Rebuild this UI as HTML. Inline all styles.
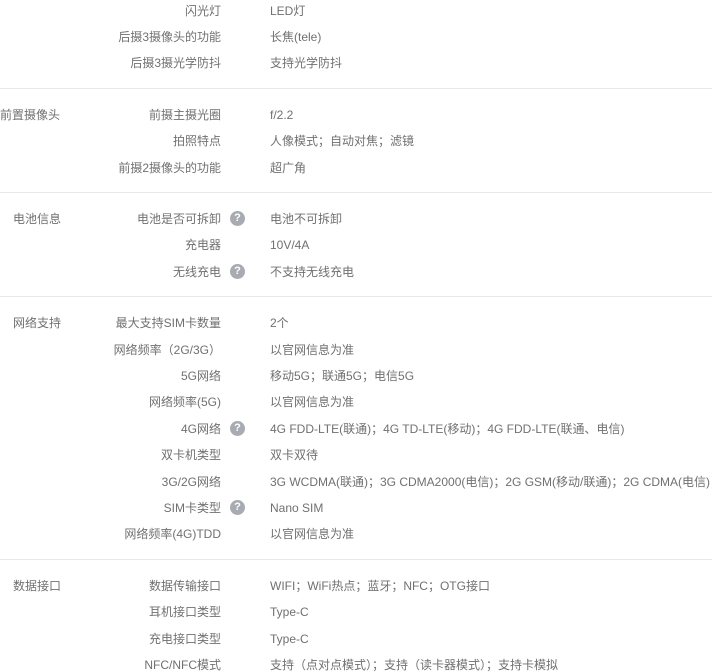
<!DOCTYPE html>
<html><head><meta charset="utf-8"><style>
body{margin:0;width:712px;height:671px;overflow:hidden;background:#fff;font-family:"Liberation Sans","Noto Sans CJK SC",sans-serif;font-size:12px;color:#707070;position:relative}
.s,.l,.v{position:absolute;white-space:nowrap;line-height:14px;margin-top:1px}
.l{right:491px;text-align:right}
.v{left:270px}
.hr{position:absolute;left:0;width:712px;height:1px;background:#e8e8e8}
.q{position:absolute;left:230px;width:15px;height:15px;border-radius:50%;background:#a9abb3;color:#fff;font-weight:bold;font-size:11px;line-height:15px;text-align:center;margin-top:1px}
</style></head><body>
<div class="l" style="top:3px">闪光灯</div><div class="v" style="top:3px">LED灯</div>
<div class="l" style="top:29px">后摄3摄像头的功能</div><div class="v" style="top:29px">长焦(tele)</div>
<div class="l" style="top:55px">后摄3摄光学防抖</div><div class="v" style="top:55px">支持光学防抖</div>
<div class="hr" style="top:88px"></div>
<div class="s" style="left:0;top:107px">前置摄像头</div>
<div class="l" style="top:107px">前摄主摄光圈</div><div class="v" style="top:107px">f/2.2</div>
<div class="l" style="top:133px">拍照特点</div><div class="v" style="top:133px">人像模式；自动对焦；滤镜</div>
<div class="l" style="top:160px">前摄2摄像头的功能</div><div class="v" style="top:160px">超广角</div>
<div class="hr" style="top:192px"></div>
<div class="s" style="left:13px;top:211px">电池信息</div>
<div class="l" style="top:211px">电池是否可拆卸</div><div class="q" style="top:210px">?</div><div class="v" style="top:211px">电池不可拆卸</div>
<div class="l" style="top:237px">充电器</div><div class="v" style="top:237px">10V/4A</div>
<div class="l" style="top:264px">无线充电</div><div class="q" style="top:263px">?</div><div class="v" style="top:264px">不支持无线充电</div>
<div class="hr" style="top:296px"></div>
<div class="s" style="left:13px;top:315px">网络支持</div>
<div class="l" style="top:315px">最大支持SIM卡数量</div><div class="v" style="top:315px">2个</div>
<div class="l" style="top:342px">网络频率（2G/3G）</div><div class="v" style="top:342px">以官网信息为准</div>
<div class="l" style="top:368px">5G网络</div><div class="v" style="top:368px">移动5G；联通5G；电信5G</div>
<div class="l" style="top:394px">网络频率(5G)</div><div class="v" style="top:394px">以官网信息为准</div>
<div class="l" style="top:421px">4G网络</div><div class="q" style="top:420px">?</div><div class="v" style="top:421px">4G FDD-LTE(联通)；4G TD-LTE(移动)；4G FDD-LTE(联通、电信)</div>
<div class="l" style="top:447px">双卡机类型</div><div class="v" style="top:447px">双卡双待</div>
<div class="l" style="top:474px">3G/2G网络</div><div class="v" style="top:474px">3G WCDMA(联通)；3G CDMA2000(电信)；2G GSM(移动/联通)；2G CDMA(电信)</div>
<div class="l" style="top:500px">SIM卡类型</div><div class="q" style="top:499px">?</div><div class="v" style="top:500px">Nano SIM</div>
<div class="l" style="top:526px">网络频率(4G)TDD</div><div class="v" style="top:526px">以官网信息为准</div>
<div class="hr" style="top:559px"></div>
<div class="s" style="left:13px;top:578px">数据接口</div>
<div class="l" style="top:578px">数据传输接口</div><div class="v" style="top:578px">WIFI；WiFi热点；蓝牙；NFC；OTG接口</div>
<div class="l" style="top:604px">耳机接口类型</div><div class="v" style="top:604px">Type-C</div>
<div class="l" style="top:631px">充电接口类型</div><div class="v" style="top:631px">Type-C</div>
<div class="l" style="top:657px">NFC/NFC模式</div><div class="v" style="top:657px">支持（点对点模式）；支持（读卡器模式）；支持卡模拟</div>
</body></html>
